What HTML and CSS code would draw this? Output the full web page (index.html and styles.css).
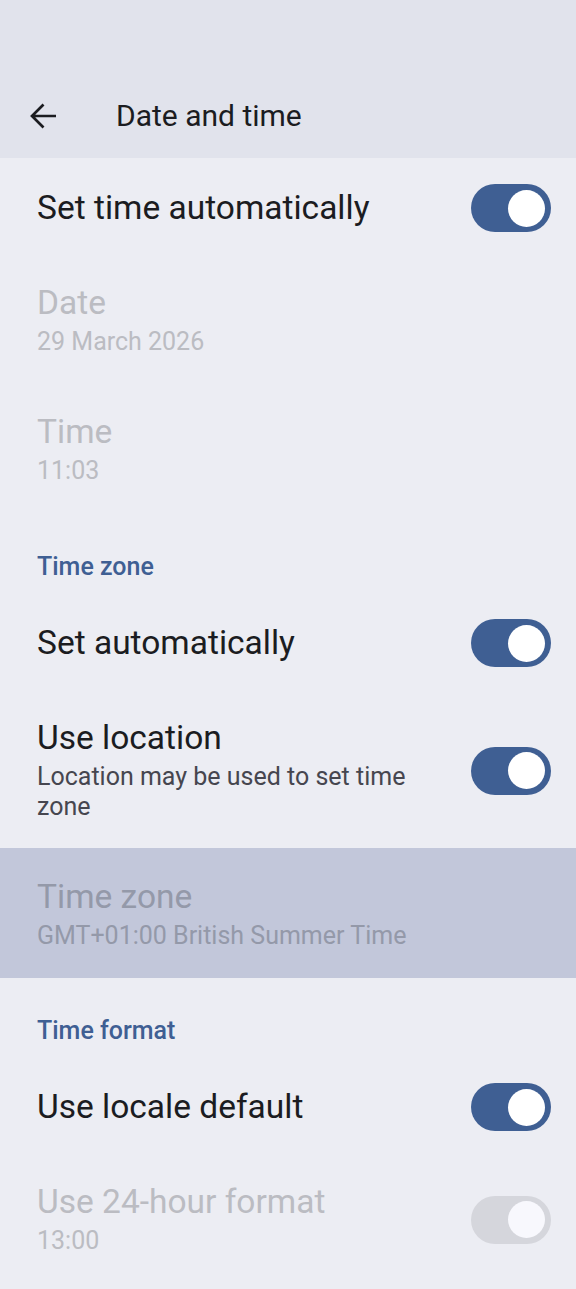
FILE: index.html
```html
<!DOCTYPE html>
<html>
<head>
<meta charset="utf-8">
<link rel="stylesheet" href="styles.css">
</head>
<body>
<div class="screen">
  <header class="appbar">
    <div class="back">
      <svg width="28" height="28" viewBox="0 0 28 28"><path d="M27 14H3.5M14.5 2.5L3 14l11.5 11.5" fill="none" stroke="#1b1c20" stroke-width="2.7"/></svg>
    </div>
    <div class="appbar-title">Date and time</div>
  </header>

  <div class="row single">
    <div class="texts"><div class="title">Set time automatically</div></div>
    <div class="switch on"><div class="thumb"></div></div>
  </div>

  <div class="row double disabled">
    <div class="texts"><div class="title">Date</div><div class="summary">29 March 2026</div></div>
  </div>

  <div class="row double disabled">
    <div class="texts"><div class="title">Time</div><div class="summary">11:03</div></div>
  </div>

  <div class="section">Time zone</div>

  <div class="row single">
    <div class="texts"><div class="title">Set automatically</div></div>
    <div class="switch on"><div class="thumb"></div></div>
  </div>

  <div class="row double loc">
    <div class="texts"><div class="title">Use location</div><div class="summary">Location may be used to set time zone</div></div>
    <div class="switch on"><div class="thumb"></div></div>
  </div>

  <div class="row double highlight">
    <div class="texts"><div class="title">Time zone</div><div class="summary">GMT+01:00 British Summer Time</div></div>
  </div>

  <div class="section second">Time format</div>

  <div class="row single">
    <div class="texts"><div class="title">Use locale default</div></div>
    <div class="switch on"><div class="thumb"></div></div>
  </div>

  <div class="row double disabled">
    <div class="texts"><div class="title">Use 24-hour format</div><div class="summary">13:00</div></div>
    <div class="switch off"><div class="thumb"></div></div>
  </div>
</div>
</body>
</html>
```
FILE: styles.css
```css
html, body {
  margin: 0;
  padding: 0;
  background: #ecedf3;
}
body {
  font-family: Roboto, "Noto Sans", sans-serif;
  color: #1b1c21;
}
.screen {
  width: 576px;
  height: 1289px;
  overflow: hidden;
  background: #ecedf3;
}
.appbar {
  height: 158px;
  background: #e1e3ec;
  display: flex;
  align-items: flex-end;
  box-sizing: border-box;
  padding-bottom: 8px;
}
.back {
  width: 116px;
  height: 68px;
  display: flex;
  align-items: center;
  padding-left: 29px;
  box-sizing: border-box;
}
.appbar-title {
  height: 68px;
  line-height: 68px;
  font-size: 30px;
  color: #1b1c21;
}
.row {
  display: flex;
  align-items: center;
  gap: 32px;
  padding: 0 25px 0 37px;
  box-sizing: border-box;
}
.row.single {
  height: 100px;
}
.row.double {
  padding-top: 26px;
  padding-bottom: 30px;
}
.row.loc {
  padding-bottom: 26px;
}
.row.highlight {
  padding-top: 30px;
  padding-bottom: 27px;
}
.texts {
  flex: 1;
  min-width: 0;
}
.title {
  font-size: 33.5px;
  line-height: 38px;
}
.summary {
  font-size: 25px;
  line-height: 30px;
  margin-top: 5px;
  color: #46464f;
}
.disabled .title, .disabled .summary {
  color: #bbbcc2;
}
.highlight {
  background: #c2c7da;
}
.highlight .title, .highlight .summary {
  color: #9499a9;
}
.section {
  height: 77px;
  box-sizing: border-box;
  padding: 36px 0 0 37px;
  font-size: 25px;
  line-height: 30px;
  font-weight: 500;
  color: #3f5f93;
}
.section.second {
  height: 79px;
  padding-top: 38px;
}
.switch {
  width: 80px;
  height: 48px;
  border-radius: 24px;
  display: flex;
  align-items: center;
  justify-content: flex-end;
  padding-right: 6px;
  box-sizing: border-box;
  flex: none;
}
.switch.on {
  background: #3f5f93;
}
.switch.off {
  background: #d5d6dc;
}
.thumb {
  width: 37px;
  height: 37px;
  border-radius: 50%;
  background: #ffffff;
}
.switch.off .thumb {
  background: #f8f8fd;
}
```
